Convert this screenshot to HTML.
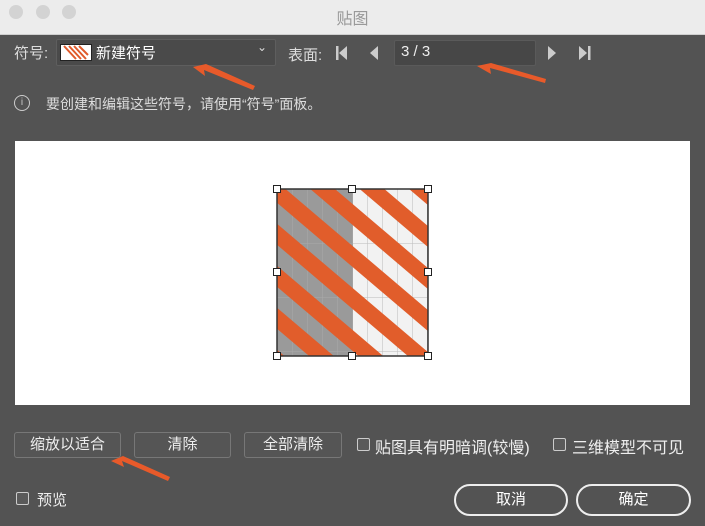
<!DOCTYPE html>
<html><head><meta charset="utf-8"><style>
html,body{margin:0;width:705px;height:526px;overflow:hidden}
body{background:#535353;font-family:"Liberation Sans","Noto Sans CJK SC",sans-serif;color:#e8e8e8;position:relative}
.a{position:absolute}
.title{left:0;top:0;width:705px;height:34px;background:#ececec;border-bottom:1px solid #cfcfcf}
.dot{width:14px;height:14px;border-radius:50%;background:#d3d3d3;top:5px}
.btn{border:1px solid #777;border-radius:3px;background:#555;color:#eee;font-size:15px;text-align:center;box-sizing:border-box;height:26px;line-height:24px}
.cb{width:11px;height:11px;border:1px solid #ccc;border-radius:2px;background:#5a5a5a}
.rb{border:2px solid #eee;border-radius:16px;height:32px;box-sizing:border-box;text-align:center;line-height:28px;font-size:15px;color:#fff}
</style></head><body>
<div class="a title"></div>
<div class="a dot" style="left:9px"></div><div class="a dot" style="left:36px"></div><div class="a dot" style="left:62px"></div>
<div class="a" style="left:0;width:705px;top:5px;text-align:center;color:#999;font-size:16px">贴图</div>

<div class="a" style="left:14px;top:42px;font-size:15px;color:#ddd">符号:</div>
<div class="a" style="left:56px;top:39px;width:218px;height:25px;background:#4a4a4a;border:1px solid #5e5e5e;border-radius:2px"></div>
<svg class="a" style="left:60px;top:44px" width="32" height="17"><rect x="0.5" y="0.5" width="31" height="16" fill="#fff" stroke="#222"/><g stroke="#e05a2a" stroke-width="2"><path d="M4 2 L16 15 M9 2 L21 15 M14 2 L26 15 M19 2 L28 11"/></g></svg>
<div class="a" style="left:96px;top:42px;font-size:15px;color:#fff">新建符号</div>
<div class="a" style="left:257px;top:40px;font-size:12px;color:#ddd">⌄</div>
<div class="a" style="left:288px;top:44px;font-size:15px;color:#ddd">表面:</div>
<svg class="a" style="left:334px;top:44px" width="260" height="20"><g fill="#ccc"><rect x="2" y="2" width="2.5" height="14"/><path d="M13 2 L5 9 L13 16Z"/><path d="M44 2 L36 9 L44 16Z"/><path d="M214 2 L222 9 L214 16Z"/><path d="M245 2 L253 9 L245 16Z"/><rect x="254" y="2" width="2.5" height="14"/></g></svg>
<div class="a" style="left:394px;top:40px;width:140px;height:24px;background:#474747;border:1px solid #5a5a5a;border-radius:2px"></div>
<div class="a" style="left:401px;top:43px;font-size:15px;color:#eee">3 / 3</div>
<svg class="a" style="left:0;top:0" width="705" height="526"><g fill="#e85a2a"><path d="M193 67 L206 64 L255 86 L253 90 L204 70 L205 76Z"/><path d="M477 66 L491 63 L546 79 L545 83 L490 68 L491 74Z"/><path d="M111 461 L123 456 L170 477 L168 481 L122 461 L124 467Z"/></g></svg>

<div class="a" style="left:14px;top:95px;width:14px;height:14px;border:1px solid #ccc;border-radius:50%;font-size:10px;text-align:center;line-height:14px;color:#ccc">i</div>
<div class="a" style="left:46px;top:94px;font-size:14px;color:#ddd">要创建和编辑这些符号，请使用“符号”面板。</div>

<div class="a" style="left:15px;top:141px;width:675px;height:264px;background:#fff"></div>
<svg class="a" style="left:272px;top:184px" width="162" height="178">
<defs><clipPath id="c"><rect x="5" y="5" width="151" height="167"/></clipPath>
<pattern id="g" width="15" height="54" patternUnits="userSpaceOnUse" x="5" y="5"><path d="M0 0V54M0 0H15" stroke="#aaa" stroke-width="1"/></pattern>
<pattern id="w" width="15" height="54" patternUnits="userSpaceOnUse" x="5" y="5"><path d="M0 0V54M0 0H15" stroke="#bbb" stroke-width="1"/></pattern></defs>
<g clip-path="url(#c)">
<rect x="5" y="5" width="76" height="167" fill="#9a9a9a"/><rect x="5" y="5" width="76" height="167" fill="url(#g)"/>
<rect x="81" y="5" width="75" height="167" fill="#f2f2f2"/><rect x="81" y="5" width="75" height="167" fill="url(#w)"/>
<g stroke="#e15d2b" stroke-width="16">
<path d="M-200 -166 L300 259"/><path d="M-200 -124 L300 301"/><path d="M-200 -82 L300 343"/><path d="M-200 -40 L300 385"/><path d="M-200 2 L300 427"/><path d="M-200 44 L300 469"/><path d="M-200 -208 L300 217"/><path d="M-200 -250 L300 175"/><path d="M-200 -292 L300 133"/><path d="M-200 -334 L300 91"/>
</g></g>
<rect x="5" y="5" width="151" height="167" fill="none" stroke="#333" stroke-width="1.5"/>
<g fill="#fff" stroke="#222"><rect x="1.5" y="1.5" width="7" height="7"/><rect x="76.5" y="1.5" width="7" height="7"/><rect x="152.5" y="1.5" width="7" height="7"/><rect x="1.5" y="84.5" width="7" height="7"/><rect x="152.5" y="84.5" width="7" height="7"/><rect x="1.5" y="168.5" width="7" height="7"/><rect x="76.5" y="168.5" width="7" height="7"/><rect x="152.5" y="168.5" width="7" height="7"/></g>
</svg>

<div class="a btn" style="left:14px;top:432px;width:107px">缩放以适合</div>
<div class="a btn" style="left:134px;top:432px;width:97px">清除</div>
<div class="a btn" style="left:244px;top:432px;width:98px">全部清除</div>
<div class="a cb" style="left:357px;top:438px"></div>
<div class="a" style="left:375px;top:434px;font-size:16px;color:#eee">贴图具有明暗调(较慢)</div>
<div class="a cb" style="left:553px;top:438px"></div>
<div class="a" style="left:572px;top:434px;font-size:16px;color:#eee">三维模型不可见</div>
<div class="a cb" style="left:16px;top:492px"></div>
<div class="a" style="left:37px;top:489px;font-size:15px;color:#eee">预览</div>
<div class="a rb" style="left:454px;top:484px;width:114px">取消</div>
<div class="a rb" style="left:576px;top:484px;width:115px">确定</div>
</body></html>
